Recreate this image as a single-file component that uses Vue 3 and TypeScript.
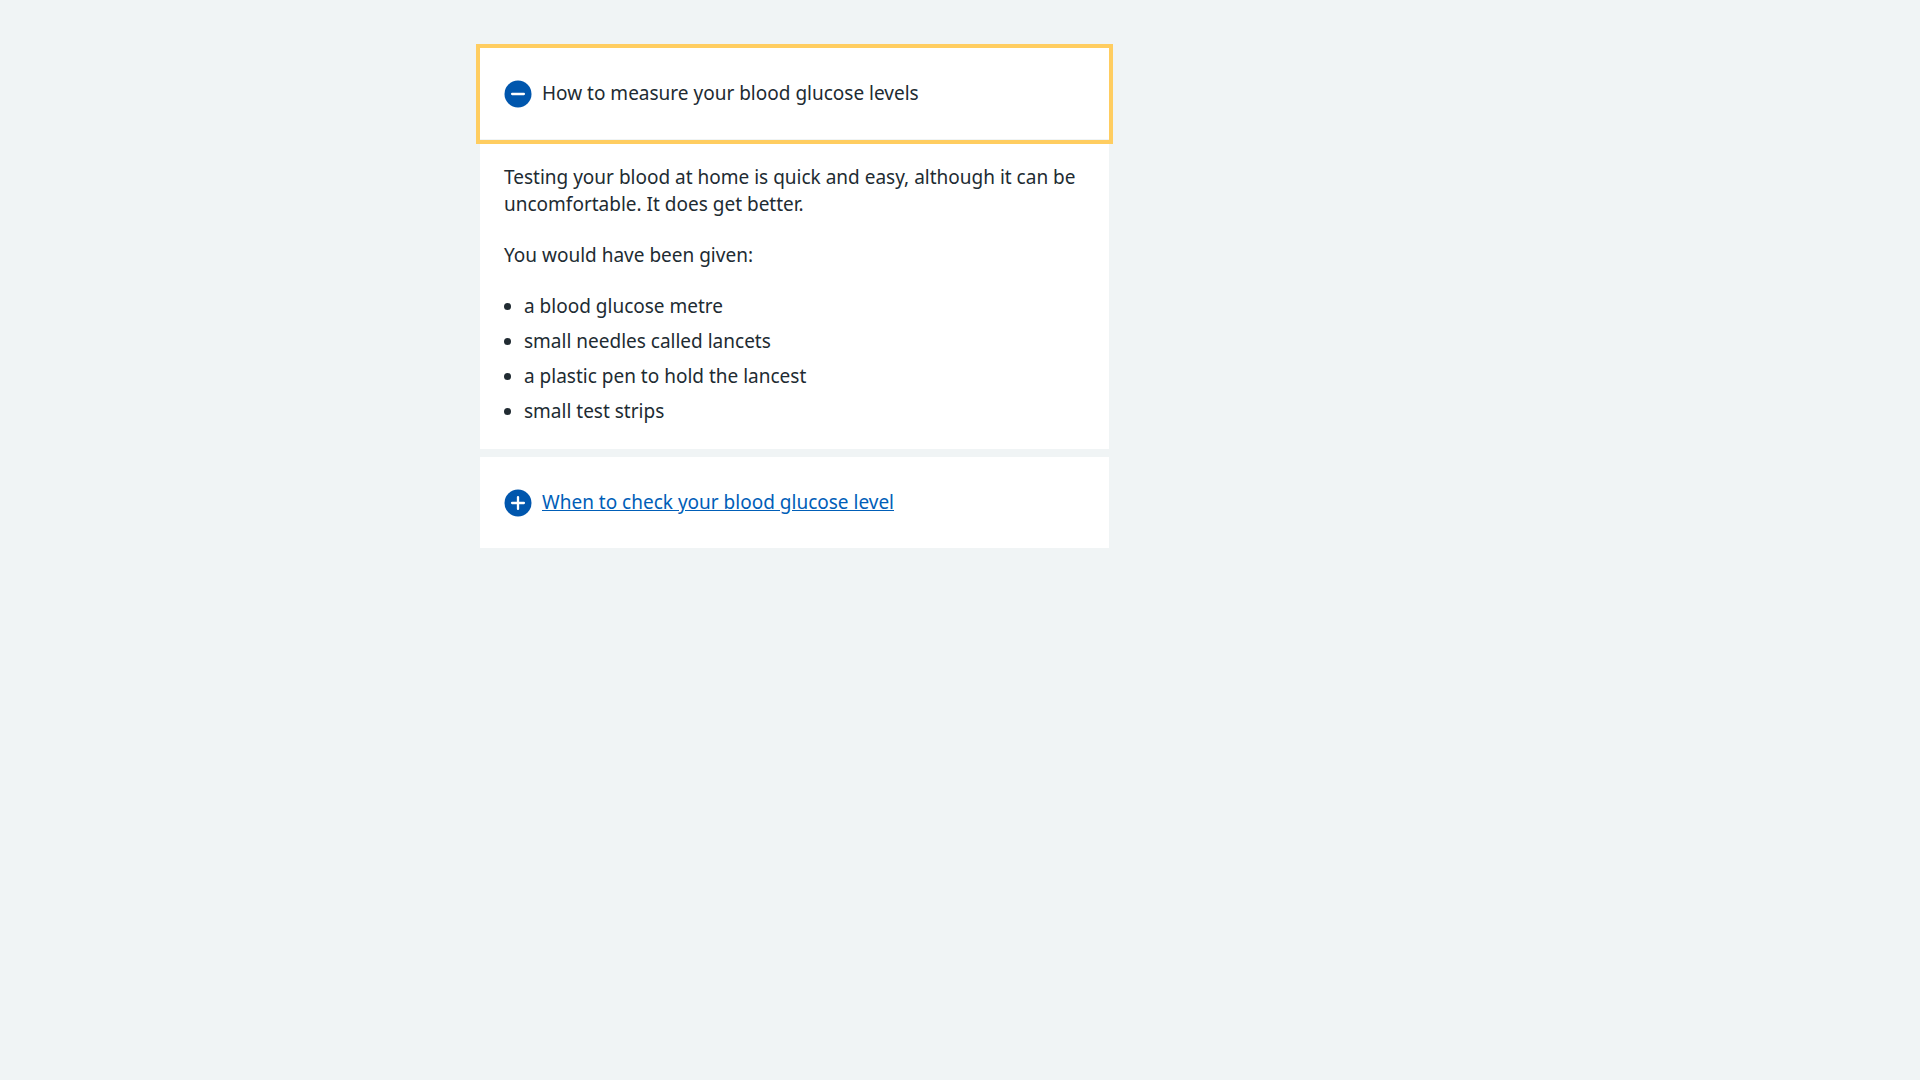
<script setup lang="ts">
const kit: string[] = [
  'a blood glucose metre',
  'small needles called lancets',
  'a plastic pen to hold the lancest',
  'small test strips',
]
</script>

<template>
  <main class="container">
    <div class="column">
      <details class="expander" open>
        <summary class="summary summary-focused">
          <svg class="icon" viewBox="0 0 28 28" aria-hidden="true">
            <circle cx="14" cy="14" r="13.5" />
            <path d="M8.1 14h11.8" />
          </svg>
          <span class="summary-text">How to measure your blood glucose levels</span>
        </summary>
        <div class="content">
          <p>
            Testing your blood at home is quick and easy, although it can be uncomfortable. It does
            get better.
          </p>
          <p>You would have been given:</p>
          <ul>
            <li v-for="item in kit" :key="item">{{ item }}</li>
          </ul>
        </div>
      </details>

      <details class="expander">
        <summary class="summary">
          <svg class="icon" viewBox="0 0 28 28" aria-hidden="true">
            <circle cx="14" cy="14" r="13.5" />
            <path d="M8.1 14h11.8M14 8.1v11.8" />
          </svg>
          <span class="summary-text summary-link">When to check your blood glucose level</span>
        </summary>
      </details>
    </div>
  </main>
</template>

<style>
html {
  background: #f0f4f5;
}
</style>

<style scoped>
.container {
  display: grid;
  grid-template-columns: 2fr 1fr;
  gap: 16px;
  max-width: 960px;
  margin: 0 auto;
  padding: 48px 0;
  color: #212b32;
  font-family: 'Noto Sans', 'Open Sans', sans-serif;
  font-size: 19px;
  line-height: 27px;
}

.column {
  display: flex;
  flex-direction: column;
  gap: 8px;
}

.expander {
  background: #fff;
}

.summary {
  display: flex;
  align-items: center;
  gap: 10px;
  padding: 32px 24px;
  cursor: pointer;
  list-style: none;
}

.summary::-webkit-details-marker {
  display: none;
}

.summary-focused {
  border-bottom: 1px solid #f0f4f5;
  box-shadow: 0 0 0 4px #ffcd60;
}

.icon {
  flex: none;
  width: 28px;
  height: 28px;
  margin-bottom: -1px;
}

.icon circle {
  fill: #0056ad;
}

.icon path {
  stroke: #fff;
  stroke-width: 2.3;
  stroke-linecap: round;
}

.summary-link {
  color: #005eb8;
  text-decoration: underline;
}

.content {
  padding: 24px;
}

p {
  margin: 0 0 24px;
}

ul {
  display: flex;
  flex-direction: column;
  gap: 8px;
  margin: 0;
  padding-left: 20px;
}
</style>
